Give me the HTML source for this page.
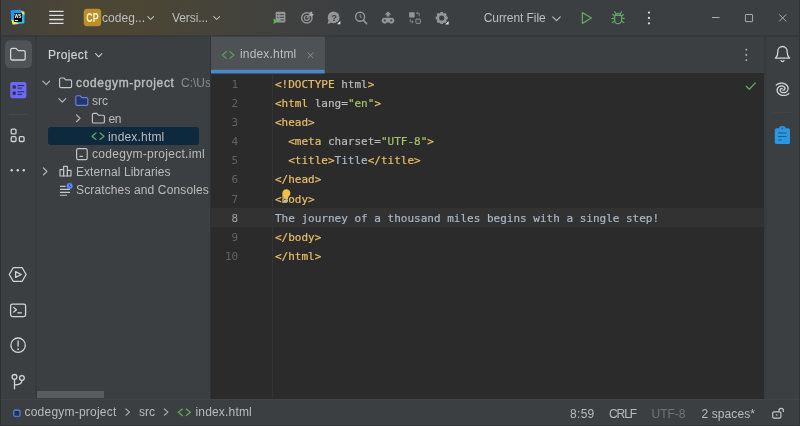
<!DOCTYPE html>
<html lang="en">
<head>
<meta charset="UTF-8">
<title>codegym-project – index.html</title>
<style>
*{box-sizing:border-box;margin:0;padding:0}
html,body{width:800px;height:426px;overflow:hidden;background:#3c3f41}
body{position:relative;font-family:"Liberation Sans",sans-serif;font-size:12px;color:#bbbbbb}
.abs{position:absolute}
#root{position:absolute;left:0;top:0;width:800px;height:426px;overflow:hidden;will-change:transform;filter:blur(0.35px)}
#titlebar{left:0;top:0;width:800px;height:36px;background:linear-gradient(90deg,#3f4040 0px,#46433a 30px,#4c4634 75px,#4c4634 125px,#46443a 210px,#3f4040 300px,#3c3f41 345px,#3c3f41 800px)}
#winborder{left:0;top:0;width:1px;height:426px;background:#2d2f30}
#leftstrip{left:0;top:36px;width:37px;height:364px;background:#3c3f41}
#project{left:37px;top:36px;width:174px;height:364px;background:#3c3f41;border-right:1px solid #2f3132;overflow:hidden}
#tabbar{left:211px;top:36px;width:554px;height:37px;background:#3c3f41}
#tab{left:211px;top:36px;width:113.5px;height:37px;background:#4e5254}
#editor{left:211px;top:73px;width:554px;height:327px;background:#2b2b2b}
#gline{left:272px;top:73.5px;width:1px;height:326px;background:#343434}
#curline{left:211px;top:208px;width:553px;height:18.6px;background:#323232}
#rightstrip{left:764px;top:36px;width:36px;height:364px;background:#3c3f41}
#status{left:0;top:399px;width:800px;height:27px;background:#3c3f41;border-top:1px solid #414446}
.t{position:absolute;white-space:pre;line-height:16px}
#code,#lnums{position:absolute;top:0;font-family:"DejaVu Sans Mono","Liberation Mono",monospace;font-size:11px;line-height:19px;white-space:pre}
#code{left:275px;color:#a9b7c6;-webkit-text-stroke:0.2px}
#lnums{left:211px;width:27.2px;text-align:right;color:#606366}
#code div,#lnums div{position:absolute;height:19px}
#code div{left:0}
#lnums div{right:0}
.y{color:#e8bf6a}.a{color:#bababa}.s{color:#a5c261}
#icons{position:absolute;left:0;top:0;width:800px;height:426px}
</style>
</head>
<body>
<div id="root">
<div id="titlebar" class="abs"></div>
<div id="leftstrip" class="abs"></div>
<div id="project" class="abs">
<div class="abs" style="left:11px;top:91.3px;width:151px;height:17.6px;background:#0d293e;border-radius:3px"></div>
<div class="t" style="left:11px;top:10.54px;color:#cfd1d3;letter-spacing:0.36px;-webkit-text-stroke:0.2px #cfd1d3;">Project</div>
<div class="t" style="left:39px;top:39.14px;color:#bbbbbb;"><b style="font-weight:normal;letter-spacing:0.66px;-webkit-text-stroke:0.4px #bbbbbb">codegym-project</b></div>
<div class="t" style="left:144px;top:39.14px;color:#8a8c8e;">C:\Users\</div>
<div class="t" style="left:55px;top:56.84px;color:#bbbbbb;letter-spacing:-0.06px;">src</div>
<div class="t" style="left:71.6px;top:74.84px;color:#bbbbbb;letter-spacing:-0.4px;">en</div>
<div class="t" style="left:71px;top:92.84px;color:#bbbbbb;letter-spacing:0.17px;">index.html</div>
<div class="t" style="left:55px;top:110.04px;color:#bbbbbb;letter-spacing:0.29px;">codegym-project.iml</div>
<div class="t" style="left:39px;top:127.84px;color:#bbbbbb;letter-spacing:0.06px;">External Libraries</div>
<div class="t" style="left:39px;top:145.84px;color:#bbbbbb;letter-spacing:0.13px;">Scratches and Consoles</div>
<div class="abs" style="left:0px;top:355px;width:67px;height:7px;background:#595c5e"></div>
</div>
<div id="tabbar" class="abs"></div>
<div id="tab" class="abs"></div>
<div id="editor" class="abs"></div>
<div id="curline" class="abs"></div>
<div id="gline" class="abs"></div>
<div id="rightstrip" class="abs"></div>
<div id="status" class="abs"></div>
<div id="winborder" class="abs"></div>
<div class="abs" style="left:799px;top:0;width:1px;height:426px;background:#303233"></div>
<div class="abs" style="left:0;top:425px;width:800px;height:1px;background:#303233"></div>
<div class="t" style="left:102px;top:9.84px;color:#bcbec0;letter-spacing:0.04px;">codeg...</div>
<div class="t" style="left:172px;top:9.84px;color:#bcbec0;letter-spacing:-0.08px;">Versi...</div>
<div class="t" style="left:483.7px;top:9.84px;color:#bcbec0;letter-spacing:-0.06px;">Current File</div>
<div class="t" style="left:240px;top:46.34px;color:#bdbfc1;letter-spacing:0.17px;">index.html</div>
<div id="lnums"><div style="top:75px">1</div><div style="top:94px">2</div><div style="top:113px">3</div><div style="top:132px">4</div><div style="top:151px">5</div><div style="top:170px">6</div><div style="top:190px">7</div><div style="top:209px;color:#a4a3a3">8</div><div style="top:228px">9</div><div style="top:247px">10</div></div>
<div id="code"><div style="top:75px"><span class="y">&lt;!DOCTYPE </span><span class="a">html</span><span class="y">&gt;</span></div><div style="top:94px"><span class="y">&lt;html</span><span class="a"> lang=</span><span class="s">"en"</span><span class="y">&gt;</span></div><div style="top:113px"><span class="y">&lt;head&gt;</span></div><div style="top:132px">  <span class="y">&lt;meta</span><span class="a"> charset=</span><span class="s">"UTF-8"</span><span class="y">&gt;</span></div><div style="top:151px">  <span class="y">&lt;title&gt;</span>Title<span class="y">&lt;/title&gt;</span></div><div style="top:170px"><span class="y">&lt;/head&gt;</span></div><div style="top:190px"><span class="y">&lt;body&gt;</span></div><div style="top:209px">The journey of a thousand miles begins with a single step!</div><div style="top:228px"><span class="y">&lt;/body&gt;</span></div><div style="top:247px"><span class="y">&lt;/html&gt;</span></div></div>
<div class="t" style="left:24.5px;top:404.34px;color:#bbbbbb;letter-spacing:0.22px;">codegym-project</div>
<div class="t" style="left:139px;top:404.34px;color:#bbbbbb;letter-spacing:-0.06px;">src</div>
<div class="t" style="left:195.5px;top:404.34px;color:#bbbbbb;letter-spacing:0.17px;">index.html</div>
<div class="t" style="left:570px;top:405.64px;color:#bbbbbb;letter-spacing:0.31px;">8:59</div>
<div class="t" style="left:609px;top:405.64px;color:#bbbbbb;letter-spacing:-1.1px;">CRLF</div>
<div class="t" style="left:651.5px;top:405.64px;color:#707274;letter-spacing:-0.02px;">UTF-8</div>
<div class="t" style="left:701.5px;top:405.64px;color:#bbbbbb;letter-spacing:0.09px;">2 spaces*</div>
<svg id="icons" viewBox="0 0 800 426" width="800" height="426" fill="none" font-family="Liberation Sans, sans-serif">
<defs>
<linearGradient id="wsg" x1="0" y1="0" x2="1" y2="1">
<stop offset="0" stop-color="#1e8df2"/><stop offset="0.5" stop-color="#22a6ee"/><stop offset="1" stop-color="#21d0e6"/>
</linearGradient>
</defs>
<!-- borders -->
<rect x="35.300" y="36" width="1.400" height="363" fill="#35383a"/>
<rect x="763.900" y="36" width="2.400" height="363" fill="#383b3d"/>
<rect x="0" y="35.250" width="800" height="1.350" fill="#35383a"/>
<!-- WebStorm logo -->
<g>
<path d="M10.6 10.2 L20 9.8 L24.4 12 L24.4 23.2 L13 24.4 L11.2 20 Z" fill="url(#wsg)"/>
<path d="M21 10.900 L24.400 11.700 L24.400 15.500 L22.200 13.600 Z" fill="#f4e83c"/>
<path d="M11.4 19.5 L14.5 21 L19 24 L12.6 24.5 Z" fill="#f4e83c"/>
<rect x="14" y="13.2" width="8" height="8.7" fill="#000"/>
<text x="14.500" y="17.900" font-size="4.800" font-weight="bold" fill="#fff" textLength="6.900" lengthAdjust="spacingAndGlyphs">WS</text>
<rect x="14.8" y="20" width="3.200" height="0.900" fill="#fff"/>
</g>
<!-- hamburger -->
<g stroke="#dcdee1" stroke-width="1.3">
<path d="M49.2 11.4H63.6M49.2 15.4H63.6M49.2 19.5H63.6M49.2 23.3H63.6"/>
</g>
<!-- CP badge -->
<rect x="83.7" y="8.8" width="17.5" height="17.5" rx="3.5" fill="#bb8e28"/>
<text x="86.3" y="21.9" font-size="12" font-weight="bold" fill="#fff3d2" textLength="12.2" lengthAdjust="spacingAndGlyphs">CP</text>
<!-- title chevrons -->
<g stroke="#bfc1c4" stroke-width="1.05" stroke-linecap="round" stroke-linejoin="round">
<path d="M147.8 16.6l2.9 2.9l2.9-2.9"/>
<path d="M213.8 16.6l2.9 2.9l2.9-2.9"/>
<path d="M552.7 16.8l3.8 3.8l3.8-3.8"/>
</g>

<!-- title toolbar icons -->
<g>
<!-- 1 task list + play -->
<rect x="275.6" y="11.8" width="9.8" height="10.8" rx="1.4" fill="#939597"/>
<g stroke="#46473f" stroke-width="1">
<path d="M279.6 14.6H284M279.6 17.3H284M280.6 20H284"/>
<path d="M277 14.6h1.2M277 17.3h1.2" />
</g>
<path d="M273.6 18.4L278.2 21.2L273.6 24Z" fill="#4fc04a"/>
<!-- 2 target -->
<circle cx="306.8" cy="17.9" r="5.2" stroke="#939597" stroke-width="1.5"/>
<circle cx="306.8" cy="17.9" r="2.4" stroke="#939597" stroke-width="1.2"/>
<path d="M306.8 17.9L311 13.7" stroke="#939597" stroke-width="1.2"/>
<path d="M309.6 12.6l2.6-1.2l0.2 2.6l1.6 0.2l-2.2 2.2l-2.2-0.4z" fill="#a8aaac"/>
<!-- 3 help bubble -->
<circle cx="333.6" cy="17.4" r="5.9" fill="#939597"/>
<path d="M328.4 20.6l-0.8 3.4l4-1.4z" fill="#939597"/>
<text x="331.2" y="21" font-size="9.5" font-weight="bold" fill="#3f403c">?</text>
<path d="M340.4 20.8v3.4h-3.4z" fill="#e0e0e0"/>
<!-- 4 magnifier -->
<circle cx="360.100" cy="16.800" r="4.500" stroke="#939597" stroke-width="1.400"/>
<path d="M363.6 20.4l3 3.2" stroke="#939597" stroke-width="1.6" stroke-linecap="round"/>
<path d="M360.2 14.4v2.8h1.6" stroke="#939597" stroke-width="0.9"/>
<!-- 5 gamepad -->
<path d="M384.6 17.8h6.8a2.9 2.9 0 0 1 2.9 2.9v0a2.9 2.9 0 0 1-4.9 2.1l-0.4-0.4h-2l-0.4 0.4a2.9 2.9 0 0 1-4.9-2.1v0a2.9 2.9 0 0 1 2.9-2.9z" fill="#939597"/>
<circle cx="384.8" cy="20.6" r="1" fill="#3e403f"/><circle cx="391.3" cy="20.6" r="1" fill="#3e403f"/>
<path d="M388 11.4l3.4 3.2h-2v1.8h-2.8v-1.8h-2z" fill="#939597"/>
<!-- 6 squares swap -->
<rect x="409.2" y="12.2" width="5.4" height="5.2" rx="0.6" fill="#939597"/>
<rect x="415.9" y="19.1" width="4.4" height="4.2" rx="0.5" stroke="#939597" stroke-width="1"/>
<path d="M416.4 13.2h2.8v3.2M416.4 13.2l1.4-1.2M416.4 13.2l1.4 1.2" stroke="#8d8f91" stroke-width="0.8"/>
<path d="M410.2 19v2.8h3M413.2 21.8l-1.3-1.2M413.2 21.8l-1.3 1.2" stroke="#8d8f91" stroke-width="0.8"/>
<!-- 7 gear -->
<circle cx="441.7" cy="18" r="3.9" stroke="#939597" stroke-width="2.6"/>
<g stroke="#939597" stroke-width="2.6">
<path d="M441.7 11.9v2M441.7 22.1v2M435.6 18h2M445.8 18h2M437.4 13.7l1.4 1.4M444.6 20.9l1.4 1.4M446 13.7l-1.4 1.4M438.8 20.9l-1.4 1.4"/>
</g>
<path d="M448.6 21v3.4h-3.4z" fill="#e0e0e0"/>
</g>
<!-- run -->
<path d="M582.4 12.6v10.8l9-5.4z" stroke="#5fa864" stroke-width="1.3" stroke-linejoin="round"/>
<!-- debug bug -->
<g stroke="#5fa864" stroke-width="1.2" stroke-linecap="round">
<path d="M614.6 17.2a3.5 3.5 0 0 1 7 0v3a3.5 3.5 0 0 1-7 0z"/>
<path d="M615.4 15.4h5.4"/>
<path d="M616 13.6l-1.4-1.8M620.2 13.6l1.4-1.8"/>
<path d="M614.6 18.4h-2.6M621.6 18.4h2.6M614.8 21l-2.4 1.6M621.4 21l2.4 1.6M614.8 16l-2.2-1.4M621.4 16l2.2-1.4"/>
</g>
<!-- kebab title -->
<g fill="#d6d8db"><circle cx="649" cy="12.6" r="1.15"/><circle cx="649" cy="18" r="1.15"/><circle cx="649" cy="23.3" r="1.15"/></g>
<!-- window controls -->
<g stroke="#a9abad" stroke-width="1">
<path d="M712 17.5h7.6"/>
<rect x="745.4" y="14.5" width="7.2" height="7.2" rx="0.6"/>
<path d="M779.2 14.4l7 7M786.2 14.4l-7 7"/>
</g>

<!-- left strip -->
<rect x="5" y="40.2" width="27" height="27.8" rx="5.5" fill="#4f5355"/>
<path d="M10.6 50v8.4a1.6 1.6 0 0 0 1.6 1.6h11.4a1.6 1.6 0 0 0 1.6-1.6v-6.2a1.6 1.6 0 0 0-1.6-1.6h-5.4l-2.2-2.2h-3.8a1.6 1.6 0 0 0-1.6 1.6z" stroke="#d2d4d8" stroke-width="1.3" stroke-linejoin="round"/>
<rect x="10.2" y="82" width="16.2" height="16.2" rx="2.2" fill="#6d6af2"/>
<g fill="#2d2f5e"><rect x="12.6" y="85.4" width="3.2" height="3.2"/><rect x="12.6" y="91.6" width="3.2" height="3.2"/>
<rect x="17.4" y="85" width="6.8" height="1.1"/><rect x="17.4" y="87.6" width="4.6" height="1.1"/><rect x="17.4" y="91.2" width="6.8" height="1.1"/><rect x="17.4" y="93.8" width="4.6" height="1.1"/></g>
<path d="M9 114.5H28.5" stroke="#45484a" stroke-width="1"/>
<g stroke="#d2d4d8" stroke-width="1.3">
<rect x="11.2" y="129.1" width="4.8" height="4.8" rx="1.2"/>
<rect x="11.2" y="136.7" width="4.8" height="4.8" rx="1.2"/>
<rect x="19.3" y="136.7" width="4.8" height="4.8" rx="1.2"/>
</g>
<g fill="#d2d4d8"><circle cx="11.7" cy="170.2" r="1.2"/><circle cx="17.8" cy="170.2" r="1.2"/><circle cx="23.8" cy="170.2" r="1.2"/></g>
<!-- services hexagon -->
<g stroke="#d2d4d8" stroke-width="1.3" stroke-linejoin="round">
<path d="M9.3 274.5l3.900-6.800h9l3.900 6.800l-3.900 6.800h-9z"/>
<path d="M15.6 271.6v5.8l5.6-2.9z"/>
<!-- terminal -->
<rect x="10.6" y="304.2" width="15" height="12.4" rx="1.8"/>
<path d="M13.8 307.4l2.6 2.3l-2.6 2.3M17.8 312.8h3.6" stroke-linecap="round"/>
<!-- problems -->
<circle cx="18.1" cy="345.2" r="7.2"/>
<path d="M18.1 340.8v5.4" stroke-linecap="round"/>
</g>
<circle cx="18.1" cy="349.2" r="0.95" fill="#d2d4d8"/>
<!-- git -->
<g stroke="#d2d4d8" stroke-width="1.3">
<circle cx="14.5" cy="376.9" r="2.400"/><circle cx="21.9" cy="378" r="2.400"/>
<path d="M14.5 379.400v9.400M21.9 380.500c0 3.400-2.600 4.400-7.400 4.400" stroke-linecap="round"/>
</g>

<!-- project header chevron -->
<path d="M95.6 53.6l3.1 3.2l3.1-3.2" stroke="#c4c6c9" stroke-width="1.2" stroke-linecap="round" stroke-linejoin="round"/>
<!-- tree -->
<path d="M42.800000000000004 81.2l3.4 3.5l3.4-3.5" stroke="#b4b6b9" stroke-width="1.2" stroke-linecap="round" stroke-linejoin="round"/><path d="M59.6 79.3v7a1.3 1.3 0 0 0 1.3 1.3h9.4a1.3 1.3 0 0 0 1.3-1.3v-5.2a1.3 1.3 0 0 0-1.3-1.3h-4.6l-1.8-1.8h-3a1.3 1.3 0 0 0-1.3 1.3z" stroke="#c4c6c9" stroke-width="1.15" stroke-linejoin="round" fill="none"/><path d="M58.9 98.7l3.4 3.5l3.4-3.5" stroke="#b4b6b9" stroke-width="1.2" stroke-linecap="round" stroke-linejoin="round"/><path d="M75.8 97.1v7a1.3 1.3 0 0 0 1.3 1.3h9.4a1.3 1.3 0 0 0 1.3-1.3v-5.2a1.3 1.3 0 0 0-1.3-1.3h-4.6l-1.8-1.8h-3a1.3 1.3 0 0 0-1.3 1.3z" stroke="#6485de" stroke-width="1.15" stroke-linejoin="round" fill="#26356a"/><path d="M76.5 114.89999999999999l3.5 3.4l-3.5 3.4" stroke="#b4b6b9" stroke-width="1.2" stroke-linecap="round" stroke-linejoin="round"/><path d="M92.39999999999999 114.7v7a1.3 1.3 0 0 0 1.3 1.3h9.4a1.3 1.3 0 0 0 1.3-1.3v-5.2a1.3 1.3 0 0 0-1.3-1.3h-4.6l-1.8-1.8h-3a1.3 1.3 0 0 0-1.3 1.3z" stroke="#c4c6c9" stroke-width="1.15" stroke-linejoin="round" fill="none"/><path d="M95.96 133.0l-3.96 3.2l3.96 3.2M100.04 133.0l3.96 3.2l-3.96 3.2" stroke="#5fa864" stroke-width="1.3" stroke-linecap="round" stroke-linejoin="round"/><rect x="76.6" y="148.6" width="10.6" height="11" rx="1.6" stroke="#c4c6c9" stroke-width="1.15"/><path d="M79.4 156.4h3.6" stroke="#c4c6c9" stroke-width="1.15"/><path d="M43.5 168.0l3.5 3.4l-3.5 3.4" stroke="#b4b6b9" stroke-width="1.2" stroke-linecap="round" stroke-linejoin="round"/><g stroke="#c4c6c9" stroke-width="1.15" stroke-linejoin="round"><rect x="60" y="169.6" width="3.6" height="6.4"/><rect x="63.6" y="166.4" width="3.8" height="9.6"/><rect x="67.4" y="170.4" width="3.6" height="5.6"/></g><g stroke="#c4c6c9" stroke-width="1.15"><path d="M60 186.4h5.6M60 189.4h10M60 192.4h10M60 195.2h7"/></g><circle cx="69.6" cy="186" r="3" fill="#548af7"/><path d="M69.6 184.4v1.8l1.2 0.8" stroke="#25324d" stroke-width="0.7"/>
<!-- tab -->
<rect x="211" y="69.8" width="113.5" height="3.7" fill="#4a88c7"/><path d="M226.12800000000001 51.7l-3.828 3.3l3.828 3.3M230.072 51.7l3.828 3.3l-3.828 3.3" stroke="#5b9a60" stroke-width="1.3" stroke-linecap="round" stroke-linejoin="round"/><path d="M307.6 52.4l5.8 5.8M313.4 52.4l-5.8 5.8" stroke="#8b8e90" stroke-width="1"/><g fill="#b6b8bb"><circle cx="746.3" cy="49.6" r="0.950"/><circle cx="746.3" cy="54.9" r="0.950"/><circle cx="746.3" cy="60.1" r="0.950"/></g><path d="M746 86l3.300 3.300l6.300-6.700" stroke="#5fa864" stroke-width="1.3" stroke-linejoin="round"/>
<!-- right strip -->
<g stroke="#d2d4d8" stroke-width="1.3" stroke-linejoin="round" stroke-linecap="round"><path d="M775.4 58.2h14.2c-1.8-1.4-2.4-3-2.4-5.6v-1.4a4.7 4.7 0 0 0-9.4 0v1.4c0 2.6-0.600 4.200-2.400 5.600z"/><path d="M781 60.600a1.600 1.600 0 0 0 3 0"/></g><g id="spiral" stroke="#d2d4d8" stroke-width="1.35" stroke-linecap="round" stroke-linejoin="round"><path d="M776.37 85.05L777.04 84.54L777.76 84.11L778.51 83.75L779.30 83.47L780.10 83.28L780.92 83.17L781.72 83.15L782.52 83.20L783.29 83.33L784.02 83.53L784.72 83.80L785.36 84.13L785.94 84.52L786.46 84.96L786.91 85.43L787.29 85.94L787.60 86.47L787.82 87.02L787.98 87.58L788.05 88.14L788.05 88.69L787.98 89.23L787.84 89.75L787.64 90.24L787.38 90.69L787.07 91.11L786.71 91.48L786.31 91.80L785.89 92.08L785.44 92.31L784.97 92.48L784.50 92.61L784.03 92.68L783.56 92.70L783.10 92.67L782.67 92.60L782.25 92.48L781.87 92.33L781.53 92.15L781.22 91.93L780.95 91.70L780.72 91.44L780.54 91.17L780.40 90.89L780.30 90.61L780.25 90.34L780.24 90.07L780.27 89.81L780.33 89.56L780.43 89.34L780.55 89.14L780.70 88.96L780.86 88.80L781.04 88.68L781.23 88.58L781.42 88.51L781.61 88.47L781.80 88.46L781.97 88.47L782.13 88.50"/><path d="M788.83 93.55L788.16 94.06L787.44 94.49L786.69 94.85L785.90 95.13L785.10 95.32L784.28 95.43L783.48 95.45L782.68 95.40L781.91 95.27L781.18 95.07L780.48 94.80L779.84 94.47L779.26 94.08L778.74 93.64L778.29 93.17L777.91 92.66L777.60 92.13L777.38 91.58L777.22 91.02L777.15 90.46L777.15 89.91L777.22 89.37L777.36 88.85L777.56 88.36L777.82 87.91L778.13 87.49L778.49 87.12L778.89 86.80L779.31 86.52L779.76 86.29L780.23 86.12L780.70 85.99L781.17 85.92L781.64 85.90L782.10 85.93L782.53 86.00L782.95 86.12L783.33 86.27L783.67 86.45L783.98 86.67L784.25 86.90L784.48 87.16L784.66 87.43L784.80 87.71L784.90 87.99L784.95 88.26L784.96 88.53L784.93 88.79L784.87 89.04L784.77 89.26L784.65 89.46L784.50 89.64L784.34 89.80L784.16 89.92L783.97 90.02L783.78 90.09L783.59 90.13L783.40 90.14L783.23 90.13L783.07 90.10"/></g><path d="M773.500 112.600H791.500" stroke="#424547" stroke-width="1"/><path d="M776.400 128.200h2.800a3.200 2.200 0 0 1 6.400 0h2.800a1.600 1.600 0 0 1 1.600 1.600v12.600a1.600 1.600 0 0 1-1.600 1.600h-12a1.600 1.600 0 0 1-1.600-1.600v-12.600a1.600 1.600 0 0 1 1.600-1.600z" fill="#2b96e2"/><g stroke="#235a85" stroke-width="1.100"><path d="M778.200 133h8.400M778.200 136.500h8.400M778.200 140h3.600"/></g><circle cx="782.4" cy="128.400" r="0.800" fill="#235a85"/>
<!-- status bar -->
<rect x="13.800" y="410.100" width="6.200" height="6.200" rx="1.400" fill="#25324d" stroke="#548af7" stroke-width="1.100"/><path d="M126.0 409.0l3.5 3.1l-3.5 3.1" stroke="#a8aaac" stroke-width="1.2" stroke-linecap="round" stroke-linejoin="round"/><path d="M164.39999999999998 409.0l3.5 3.1l-3.5 3.1" stroke="#a8aaac" stroke-width="1.2" stroke-linecap="round" stroke-linejoin="round"/><path d="M182.26000000000002 409.1l-3.96 3.2l3.96 3.2M186.34 409.1l3.96 3.2l-3.96 3.2" stroke="#5fa864" stroke-width="1.3" stroke-linecap="round" stroke-linejoin="round"/><g stroke="#c4c6c9" stroke-width="1.150"><rect x="772.700" y="411.800" width="8.200" height="6.300" rx="1.300"/><path d="M778.900 411.800v-1.100a2.250 2.250 0 0 1 4.500 0v1.200"/><path d="M776.800 414.200v1.600"/></g>
<!-- lightbulb -->
<path d="M282.300 193.200a4.050 4.050 0 1 1 6.700 3.100c-0.700 0.700-0.900 1.400-0.900 2.800h-3.700c0-1.400-0.300-2.100-1-2.800a4 4 0 0 1-1.100-3.100z" fill="#f2bf4d"/>
<rect x="284" y="199.600" width="3.800" height="2.600" rx="0.600" fill="#b9bbbd"/>
</svg>

</div>
</body>
</html>
